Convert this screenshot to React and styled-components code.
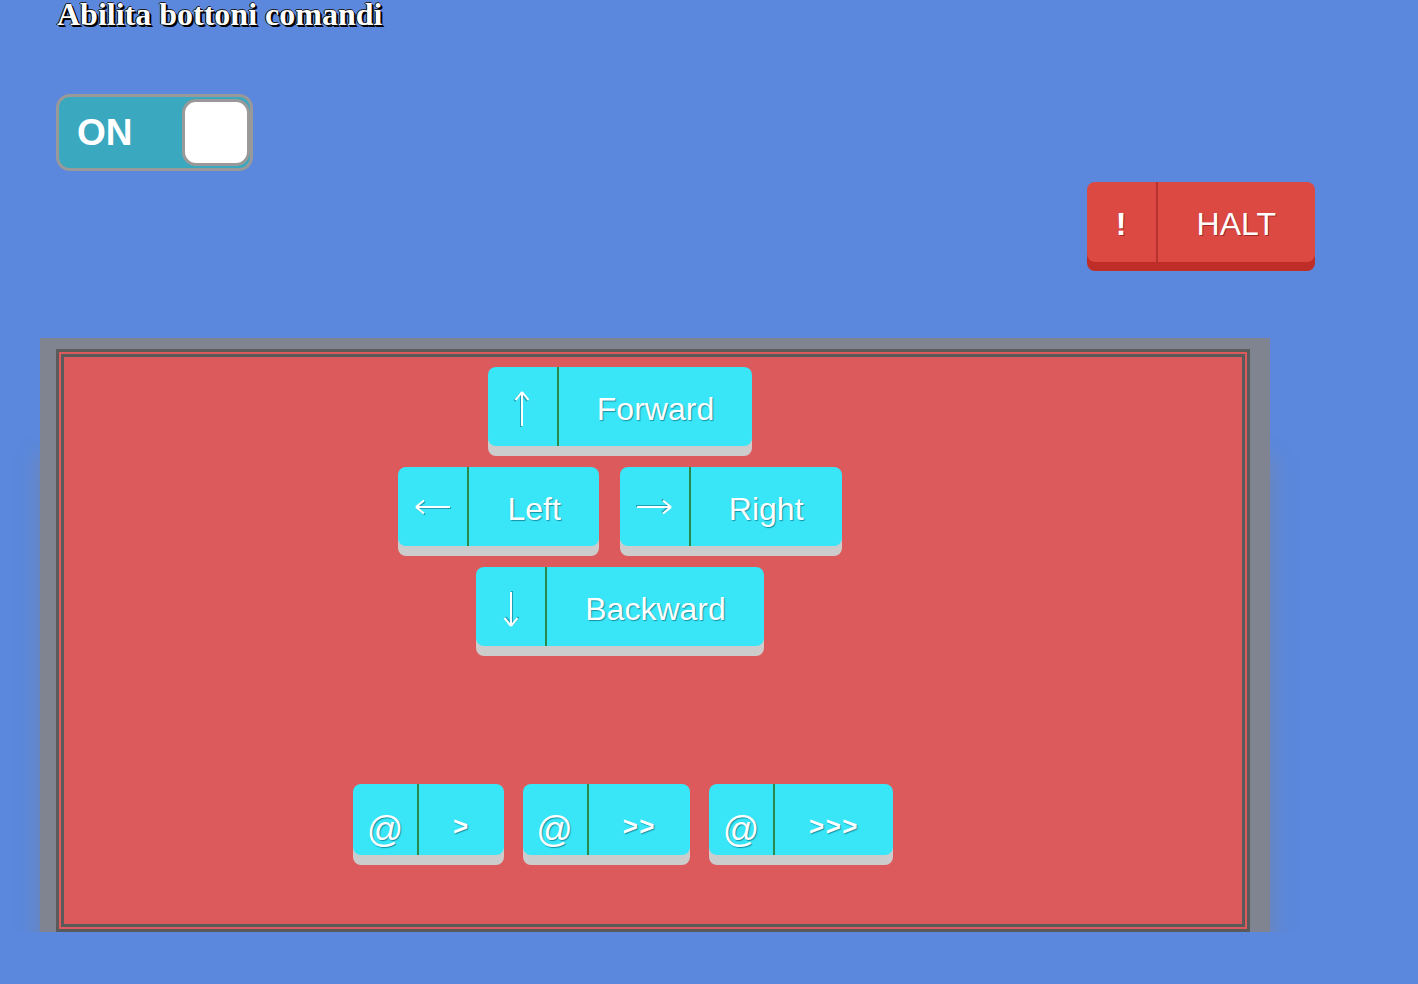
import React from 'react';
import styled, { createGlobalStyle } from 'styled-components';

const GlobalStyle = createGlobalStyle`
  html, body {
    margin: 0;
    padding: 0;
    background: #5b88dc;
    overflow: hidden;
  }
`;

const Page = styled.div`
  padding-left: 56px;
  height: 984px;
`;

const Title = styled.h1`
  margin: -4px 0 0 1px;
  font-family: 'Liberation Serif', 'Times New Roman', serif;
  font-weight: 700;
  font-size: 32px;
  line-height: 36px;
  color: #fff;
  text-shadow: 1px 1px 0 #000, 2px 2px 0 #000, -1px 0 0 #000, 0 -1px 0 #222;
`;

const Toggle = styled.div`
  margin-top: 62px;
  width: 197px;
  height: 77px;
  box-sizing: border-box;
  border: 3px solid #999;
  border-radius: 14px;
  background: #3aa8bf;
  display: flex;
  align-items: center;
  justify-content: space-between;
  padding-left: 18px;
`;

const ToggleLabel = styled.span`
  font-family: 'Liberation Sans', Arial, sans-serif;
  font-weight: 700;
  font-size: 37px;
  color: #fff;
`;

const Knob = styled.div`
  width: 68px;
  height: 67px;
  box-sizing: border-box;
  border: 3px solid #999;
  border-radius: 14px;
  background: #fff;
`;

const HaltRow = styled.div`
  display: flex;
  justify-content: flex-end;
  padding-right: 103px;
  margin-top: 11px;
`;

const Btn = styled.button`
  display: flex;
  align-items: stretch;
  padding: 0;
  border: none;
  border-radius: 8px;
  height: ${(p) => p.$h || 79}px;
  background: ${(p) => (p.$danger ? '#dc4842' : '#38e6f7')};
  box-shadow: 0 ${(p) => (p.$danger ? 9 : 10)}px 0
    ${(p) => (p.$danger ? '#bf2d29' : '#cccccc')};
  color: #fff;
  font-family: 'Liberation Sans', Arial, sans-serif;
  cursor: pointer;
`;

const Icon = styled.span`
  display: flex;
  align-items: center;
  justify-content: center;
  width: ${(p) => p.$w || 71}px;
  padding-top: ${(p) => p.$shift || 0}px;
  box-sizing: border-box;
  border-right: 2px solid ${(p) => (p.$danger ? '#b8322d' : '#2a8a4c')};
  font-size: ${(p) => p.$size || 32}px;
  font-weight: ${(p) => (p.$bold ? 700 : 400)};
  text-shadow: ${(p) =>
    p.$danger ? '1px 1px 0 rgba(120,20,20,0.6)' : '1px 1px 1px rgba(0,90,110,0.6)'};

  svg {
    filter: drop-shadow(1px 1px 0 rgba(0, 90, 110, 0.5));
  }
`;

const Label = styled.span`
  display: flex;
  align-items: center;
  padding: ${(p) => p.$shift ?? 6}px ${(p) => p.$pad || 38}px 0;
  font-size: ${(p) => p.$size || 32}px;
  font-weight: ${(p) => (p.$bold ? 700 : 400)};
  letter-spacing: ${(p) => p.$ls || 0}px;
  text-shadow: ${(p) =>
    p.$danger ? '1px 1px 0 rgba(120,20,20,0.6)' : '1px 1px 1px rgba(0,90,110,0.6)'};
`;

const Clip = styled.div`
  margin: 76px 0 0 -56px;
  padding: 0 40px;
  width: 1310px;
  overflow: hidden;
`;

const Frame = styled.div`
  width: 1230px;
  box-sizing: border-box;
  padding: 11px 20px 0 16px;
  background: #7f8490;
  box-shadow: 0 120px 18px 2px rgba(127, 132, 144, 0.55);
`;

const Panel = styled.div`
  height: 583px;
  box-sizing: border-box;
  border: 8px double #5a5a5a;
  background: #dc5a5c;
  display: flex;
  flex-direction: column;
  align-items: center;
  padding: 10px 66px 0 0;
`;

const Pad = styled.div`
  display: flex;
  flex-direction: column;
  align-items: center;
  gap: 21px;
`;

const Row = styled.div`
  display: flex;
  gap: ${(p) => p.$gap || 21}px;
`;

const SpeedRow = styled(Row)`
  margin-top: 138px;
  padding-left: 6px;
`;

const arrowRotation = { left: 0, up: 90, right: 180, down: 270 };

function Arrow({ dir }) {
  return (
    <svg
      width="38"
      height="38"
      viewBox="0 0 38 38"
      style={{ transform: `rotate(${arrowRotation[dir]}deg)` }}
    >
      <path
        d="M2 19 H36 M2 19 L10 12.5 M2 19 L10 25.5"
        fill="none"
        stroke="#fff"
        strokeWidth="2.2"
        strokeLinecap="butt"
      />
    </svg>
  );
}

const moves = [
  [{ dir: 'left', text: 'Left' }, { dir: 'right', text: 'Right' }],
];

function MoveButton({ dir, text }) {
  return (
    <Btn>
      <Icon $shift={dir === 'down' || dir === 'up' ? 4 : 0}>
        <Arrow dir={dir} />
      </Icon>
      <Label>{text}</Label>
    </Btn>
  );
}

function SpeedButton({ text }) {
  return (
    <Btn $h={71}>
      <Icon $w={66} $size={36} $shift={20}>@</Icon>
      <Label $pad={34} $size={26} $bold $ls={1.5} $shift={13}>
        {text}
      </Label>
    </Btn>
  );
}

export default function App() {
  return (
    <Page>
      <GlobalStyle />
      <Title>Abilita bottoni comandi</Title>
      <Toggle>
        <ToggleLabel>ON</ToggleLabel>
        <Knob />
      </Toggle>
      <HaltRow>
        <Btn $danger $h={80}>
          <Icon $danger $bold $w={71} $shift={4}>!</Icon>
          <Label $danger $pad={39} $shift={4}>HALT</Label>
        </Btn>
      </HaltRow>
      <Clip>
        <Frame>
          <Panel>
            <Pad>
              <MoveButton dir="up" text="Forward" />
              {moves.map((row, i) => (
                <Row key={i}>
                  {row.map((m) => (
                    <MoveButton key={m.text} {...m} />
                  ))}
                </Row>
              ))}
              <MoveButton dir="down" text="Backward" />
            </Pad>
            <SpeedRow $gap={19}>
              <SpeedButton text=">" />
              <SpeedButton text=">>" />
              <SpeedButton text=">>>" />
            </SpeedRow>
          </Panel>
        </Frame>
      </Clip>
    </Page>
  );
}
